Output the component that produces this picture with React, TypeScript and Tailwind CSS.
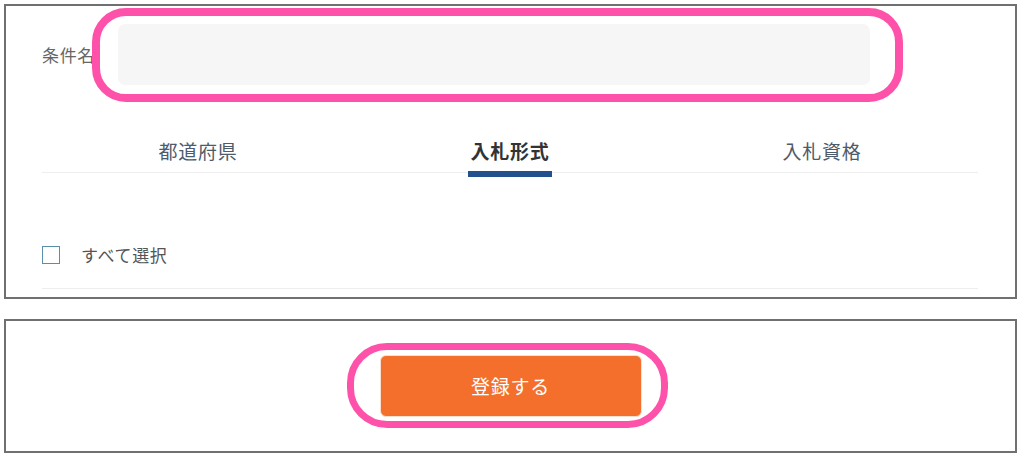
import { useState } from 'react';

const tabs = ['都道府県', '入札形式', '入札資格'];

export default function App() {
  const [active, setActive] = useState(1);
  const [name, setName] = useState('');
  const [all, setAll] = useState(false);

  return (
    <div
      className="relative w-[1024px] h-[460px] bg-white pt-[4px] pl-[4px]"
      style={{ fontFamily: '"Noto Sans CJK JP", "Noto Sans", sans-serif' }}
    >
      {/* search condition panel */}
      <div className="w-[1013px] h-[295px] border-2 border-[#707070] pt-[18px] pl-[36px] pr-[37px]">
        <div className="flex items-center">
          <label className="w-[76px] text-[17px] text-[#666] tracking-[0.04em]">条件名</label>
          <input
            value={name}
            onChange={(e) => setName(e.target.value)}
            className="w-[752px] h-[61px] rounded-[7px] bg-[#f6f6f6] px-4 text-[16px] outline-none"
          />
        </div>

        <div className="mt-[45px] flex border-b border-[#eeeeee]">
          {tabs.map((t, i) => (
            <button
              key={t}
              type="button"
              onClick={() => setActive(i)}
              className="flex-1 h-[42px] flex justify-center"
            >
              <span
                className={`relative h-full flex items-center text-[19px] tracking-[0.04em] ${
                  i === active ? 'font-bold text-[#333]' : 'text-[#4d5b6b]'
                }`}
              >
                {t}
                {i === active && (
                  <span className="absolute left-[-2px] right-[-2px] bottom-[-5px] h-[6px] bg-[#22518e]" />
                )}
              </span>
            </button>
          ))}
        </div>

        <div className="mt-[48px] h-[68px] flex items-center border-b border-[#eeeeee]">
          <button
            type="button"
            onClick={() => setAll(!all)}
            className="w-[18px] h-[18px] border-[1.5px] border-[#5b8ea8] flex items-center justify-center"
          >
            {all && <span className="w-[10px] h-[10px] bg-[#5b8ea8]" />}
          </button>
          <span className="ml-[21px] text-[17px] text-[#555] tracking-[0.04em]">すべて選択</span>
        </div>
      </div>

      {/* submit panel */}
      <div className="mt-[20px] w-[1013px] h-[134px] border-2 border-[#707070] flex items-center justify-center">
        <button
          type="button"
          className="w-[262px] h-[62px] rounded-[6px] bg-[#f46f2b] border border-[#f8e0d0] text-white text-[19px] tracking-[0.04em]"
        >
          登録する
        </button>
      </div>

      {/* highlight marks */}
      <div className="pointer-events-none absolute left-[92px] top-[8px] w-[811px] h-[94px] rounded-[34px] border-[8px] border-[#fe52aa]" />
      <div className="pointer-events-none absolute left-[347px] top-[343px] w-[321px] h-[85px] rounded-[40px] border-[7px] border-[#fe52aa]" />
    </div>
  );
}
